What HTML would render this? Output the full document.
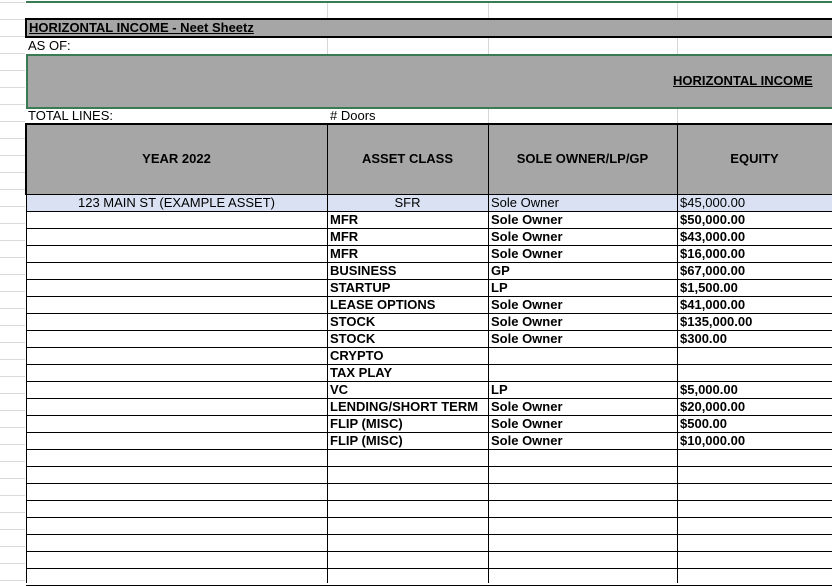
<!DOCTYPE html>
<html><head><style>
body{margin:0;width:832px;height:583px;overflow:hidden;background:#fff;font-family:"Liberation Sans",Arial,sans-serif;font-size:13px;color:#000;position:relative}
.a{position:absolute}
.t{position:absolute;white-space:nowrap;line-height:16px}
.b{font-weight:bold}
</style></head><body>
<!-- gutter light lines -->
<div id="g"></div>
<!-- top green line -->
<div class="a" style="left:26px;top:1px;width:806px;height:2px;background:#3a7a52"></div>
<div class="a" style="left:327px;top:3px;width:1px;height:16px;background:#d6d6d6"></div>
<div class="a" style="left:488px;top:3px;width:1px;height:16px;background:#d6d6d6"></div>
<div class="a" style="left:677px;top:3px;width:1px;height:16px;background:#d6d6d6"></div>
<!-- title row -->
<div class="a" style="left:25px;top:18px;width:807px;height:20px;background:#a6a6a6;border-top:2px solid #000;border-bottom:2px solid #000;box-sizing:border-box"></div>
<div class="t b" style="left:29px;top:20px;text-decoration:underline">HORIZONTAL INCOME - Neet Sheetz</div>
<!-- AS OF -->
<div class="t" style="left:28px;top:38px">AS OF:</div>
<div class="a" style="left:327px;top:38px;width:1px;height:16px;background:#d6d6d6"></div>
<div class="a" style="left:488px;top:38px;width:1px;height:16px;background:#d6d6d6"></div>
<div class="a" style="left:677px;top:38px;width:1px;height:16px;background:#d6d6d6"></div>
<!-- gray block -->
<div class="a" style="left:26px;top:54px;width:806px;height:55px;background:#a6a6a6;border:2px solid #3a7a52;border-right:none;box-sizing:border-box"></div>
<div class="t b" style="left:673px;top:73px;text-decoration:underline">HORIZONTAL INCOME</div>
<!-- total lines -->
<div class="t" style="left:28px;top:108px">TOTAL LINES:</div>
<div class="t" style="left:330px;top:108px"># Doors</div>
<div class="a" style="left:488px;top:109px;width:1px;height:15px;background:#d6d6d6"></div>
<div class="a" style="left:677px;top:109px;width:1px;height:15px;background:#d6d6d6"></div>
<!-- header -->
<div class="a" style="left:25px;top:123px;width:807px;height:72px;background:#a6a6a6;border-top:2px solid #000;border-bottom:1px solid #000;box-sizing:border-box"></div>
<div class="t b" style="left:26px;width:301px;text-align:center;top:151px">YEAR 2022</div>
<div class="t b" style="left:327px;width:161px;text-align:center;top:151px">ASSET CLASS</div>
<div class="t b" style="left:488px;width:189px;text-align:center;top:151px">SOLE OWNER/LP/GP</div>
<div class="t b" style="left:677px;width:155px;text-align:center;top:151px">EQUITY</div>
<!-- first row bg -->
<div class="a" style="left:27px;top:195px;width:805px;height:16px;background:#d9e1f2"></div>
<div id="rows"></div>
<!-- left thick border -->
<div class="a" style="left:25px;top:18px;width:2px;height:20px;background:#000"></div>
<div class="a" style="left:25px;top:123px;width:2px;height:72px;background:#000"></div>
<div class="a" style="left:26px;top:195px;width:1px;height:388px;background:#000"></div>
<div class="a" style="left:327px;top:124px;width:1px;height:459px;background:#000"></div>
<div class="a" style="left:488px;top:124px;width:1px;height:459px;background:#000"></div>
<div class="a" style="left:677px;top:124px;width:1px;height:459px;background:#000"></div>
<script>
var d=[["123 MAIN ST (EXAMPLE ASSET)","SFR","Sole Owner","$45,000.00",1],
["","MFR","Sole Owner","$50,000.00"],["","MFR","Sole Owner","$43,000.00"],["","MFR","Sole Owner","$16,000.00"],
["","BUSINESS","GP","$67,000.00"],["","STARTUP","LP","$1,500.00"],["","LEASE OPTIONS","Sole Owner","$41,000.00"],
["","STOCK","Sole Owner","$135,000.00"],["","STOCK","Sole Owner","$300.00"],["","CRYPTO","",""],["","TAX PLAY","",""],
["","VC","LP","$5,000.00"],["","LENDING/SHORT TERM","Sole Owner","$20,000.00"],["","FLIP (MISC)","Sole Owner","$500.00"],["","FLIP (MISC)","Sole Owner","$10,000.00"]];
var h="";
for(var i=0;i<23;i++){var y=195+17*i;
h+='<div class="a" style="left:26px;top:'+(y+16)+'px;width:806px;height:1px;background:#000"></div>';
var r=d[i];if(r){
if(r[4]){h+='<div class="t" style="left:26px;width:301px;text-align:center;top:'+y+'px">'+r[0]+'</div><div class="t" style="left:327px;width:161px;text-align:center;top:'+y+'px">'+r[1]+'</div><div class="t" style="left:491px;top:'+y+'px">'+r[2]+'</div><div class="t" style="left:680px;top:'+y+'px">'+r[3]+'</div>';}
else{h+='<div class="t b" style="left:330px;top:'+y+'px">'+r[1]+'</div><div class="t b" style="left:491px;top:'+y+'px">'+r[2]+'</div><div class="t b" style="left:680px;top:'+y+'px">'+r[3]+'</div>';}}}
document.getElementById("rows").innerHTML=h;
var g="";for(var y=2;y<583;y+=17){g+='<div class="a" style="left:0;top:'+y+'px;width:25px;height:1px;background:#dadada"></div>';}
document.getElementById("g").innerHTML=g;
</script>
</body></html>
